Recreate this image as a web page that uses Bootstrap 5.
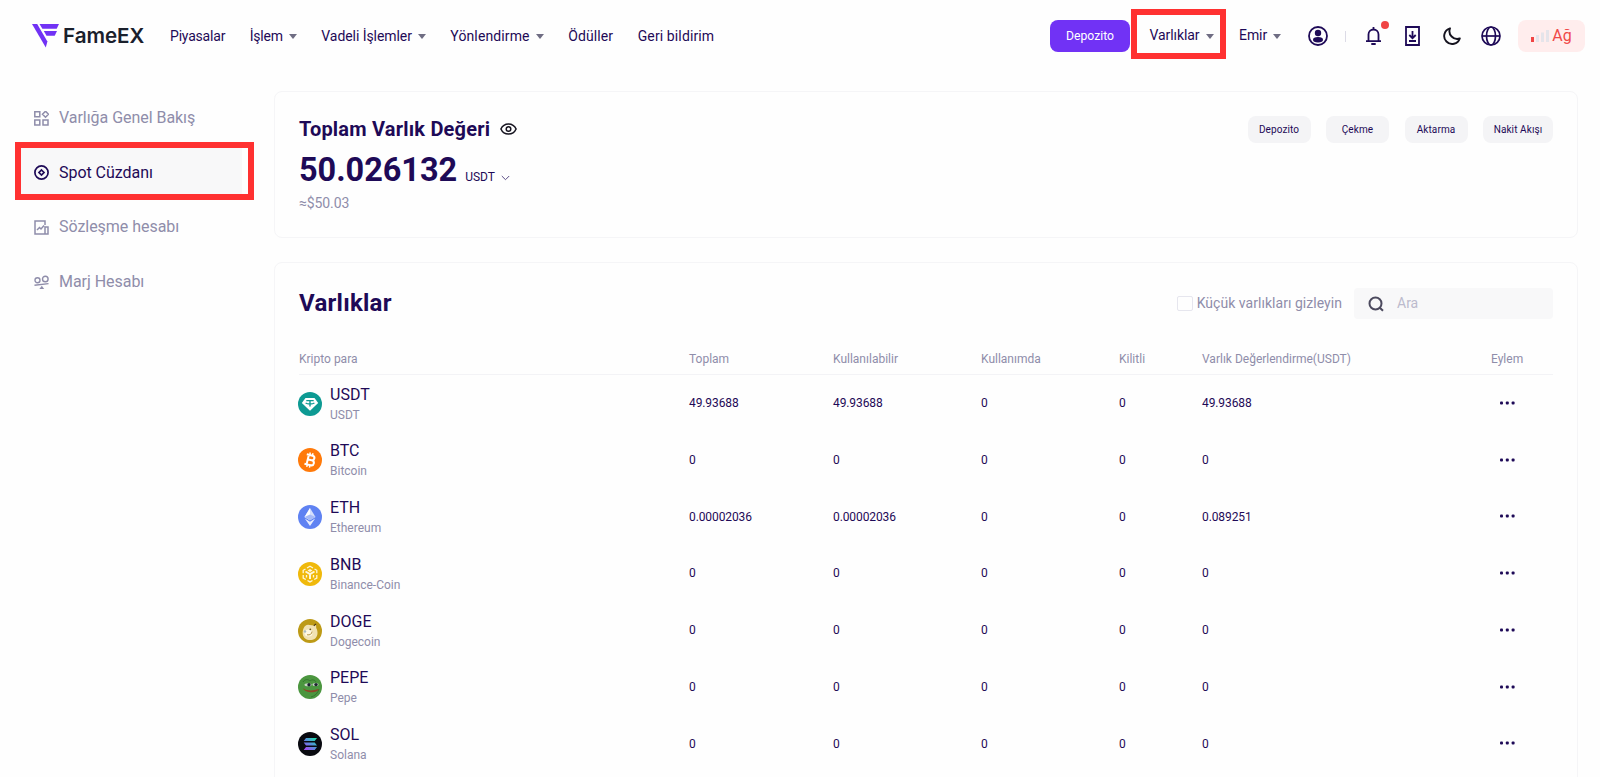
<!DOCTYPE html>
<html lang="tr">
<head>
<meta charset="utf-8">
<meta name="viewport" content="width=device-width, initial-scale=1">
<title>FameEX - Spot Cüzdanı</title>
<link rel="stylesheet" href="https://cdn.jsdelivr.net/npm/bootstrap@5.3.0/dist/css/bootstrap.min.css">
<style>
:root{--ink:#1e0a57;--muted-ink:#8f8daa;--soft:#f4f4f6;--edge:#f5f5f7;--violet:#7132f5;--alarm:#ff3131}
body{font-family:Roboto,"Noto Sans",sans-serif;color:var(--ink);background:#fefefe;height:777px;overflow:hidden;font-size:14px;line-height:1.4}
svg{display:block;flex:none}
.topbar{height:72px;padding:0 15px 0 32px}
.topbar .nav-link{color:var(--ink);font-size:14px;letter-spacing:-.07px}
.topbar .tight{letter-spacing:-.2px}
.topbar .loose{letter-spacing:.12px}
.brand-name{font:600 20.6px/24px Inter,sans-serif;color:#1a202c;letter-spacing:-.05px}
.caret{width:0;height:0;border:4px solid transparent;border-top:5px solid #6f6d83;border-bottom:0;margin-left:6px;display:inline-block}
.btn-deposit{background:var(--violet);color:#fff;width:80px;height:32px;border-radius:8px;font-size:12.2px;padding:0}
.mark-frame{position:absolute;border:6px solid var(--alarm);pointer-events:none}
.net-pill{width:67px;height:32px;border-radius:8px;background:#ffeded;color:#f04848;font-size:16px}
.alert-dot{position:absolute;width:8px;height:8px;border-radius:50%;background:#f04444;right:-8px;top:-6px}
.side{width:274px;padding:19px 20px 0 16px}
.side a{height:54.6px;padding-left:18px;color:var(--muted-ink);font-size:16px;text-decoration:none;gap:10px;letter-spacing:-.04px}
.side a.active{color:var(--ink)}
.side a.active::before{content:"";position:absolute;inset:2px 12px 5px 4px;background:#f8f8f9;z-index:-1}
.panel{border:1px solid var(--edge);border-radius:8px;background:#fefefe;padding:24px}
.total-panel{height:147px;padding-top:23px}
.total-title{font-size:20px;font-weight:700;line-height:28px;letter-spacing:.2px}
.total-sum{font-size:32.5px;font-weight:700;line-height:40px;letter-spacing:-.05px}
.btn-soft{background:var(--soft);color:var(--ink);font-size:10px;height:27px;width:63px;padding:0;border-radius:8px;letter-spacing:.1px}
.muted{color:var(--muted-ink)}
.search{width:199px;height:31px;background:#f8f8f9;border-radius:4px;padding-left:14px;gap:13px;color:#bcbbcd}
.tick{width:16px;height:15px;border:1px solid #e6e6ee;border-radius:2px}
.coins{table-layout:fixed;width:1254px;border-collapse:collapse}
.coins th{font-weight:400;color:var(--muted-ink);font-size:12px;height:31px;padding:2px 0 0;border-bottom:1px solid #f3f3f6;vertical-align:middle}
.coins td{height:56.75px;padding:2.5px 0 0;font-size:12px;letter-spacing:-.1px;vertical-align:middle}
.coins td:first-child{padding-top:4.5px;letter-spacing:0}
.coins td:first-child svg{margin:-2px 0 0 -1px}
.coins td:last-child{padding-top:1px}
.coin-code{font-size:16px;line-height:20px}
.coin-label{font-size:12px;line-height:20px;color:var(--muted-ink)}
</style>
</head>
<body>
<header class="topbar navbar navbar-expand flex-nowrap">
  <a class="d-flex align-items-center text-decoration-none" href="#" style="width:138px">
    <svg width="27" height="24" viewBox="0 0 27 24" fill="#7132f5"><path d="M0 0h5.200l10.200 17.500-1.600 6z"/><path d="M7.500 0H27l-2.300 4.800H10.400z"/><path d="M11.800 7H25l-2.300 4.800h-8.200z"/></svg>
    <span class="brand-name" style="margin-left:4px">FameEX</span>
  </a>
  <nav class="navbar-nav align-items-center" style="gap:24.500px;padding-top:1px">
    <a class="nav-link p-0 tight" href="#">Piyasalar</a>
    <a class="nav-link p-0 d-flex align-items-center tight" href="#">İşlem<i class="caret"></i></a>
    <a class="nav-link p-0 d-flex align-items-center" href="#">Vadeli İşlemler<i class="caret"></i></a>
    <a class="nav-link p-0 d-flex align-items-center loose" href="#">Yönlendirme<i class="caret"></i></a>
    <a class="nav-link p-0 loose" href="#">Ödüller</a>
    <a class="nav-link p-0 loose" href="#">Geri bildirim</a>
  </nav>
  <div class="d-flex align-items-center ms-auto">
    <button class="btn btn-deposit">Depozito</button>
    <a class="nav-link p-0 d-flex align-items-center justify-content-center position-relative" href="#" style="width:101px"><span class="mark-frame" style="inset:-17px 5px -13px 1px"></span><span style="margin-left:2px">Varlıklar</span><i class="caret"></i></a>
    <a class="nav-link p-0 d-flex align-items-center ms-2" href="#" style="width:69px">Emir<i class="caret"></i></a>
    <svg width="20" height="20" viewBox="0 0 20 20" fill="none" stroke="#1e0a57" stroke-width="1.800"><circle cx="10" cy="10" r="9"/><circle cx="10" cy="7" r="3.200" fill="#1e0a57" stroke="none"/><ellipse cx="10" cy="13.700" rx="5" ry="2.700" fill="#1e0a57" stroke="none"/></svg>
    <span style="width:1px;height:11px;background:#dcdbe6;margin:0 20px 0 17px"></span>
    <span class="position-relative"><svg width="15" height="18" viewBox="0 0 15 18" fill="none" stroke="#1e0a57" stroke-width="1.800"><path d="M0 14.200h15M2.500 14V7.500a5 5 0 0 1 10 0V14M7.500 0v2.500M5.300 17h4.400"/></svg><i class="alert-dot"></i></span>
    <svg style="margin-left:24px" width="15" height="20" viewBox="0 0 15 20" fill="none" stroke="#1e0a57" stroke-width="1.800"><path d="M1 1h13v18H1zM7.500 5v7M4.300 9l3.200 3.200L10.700 9M4 15h7"/></svg>
    <svg style="margin-left:23px" width="18" height="18" viewBox="0 0 18 18" fill="none" stroke="#15131f" stroke-width="1.900" stroke-linejoin="round"><path d="M7 1.300A8 8 0 1 0 16.800 11.500 7.800 7.800 0 0 1 7 1.300z"/></svg>
    <svg style="margin-left:20px" width="20" height="20" viewBox="0 0 20 20" fill="none" stroke="#1e0a57" stroke-width="1.700"><circle cx="10" cy="10" r="9"/><ellipse cx="10" cy="10" rx="4.500" ry="9"/><path d="M1 10h18"/></svg>
    <div class="net-pill d-flex align-items-center justify-content-center" style="margin-left:17px"><svg width="18" height="12" viewBox="0 0 18 12"><path fill="#f04444" d="M0 7h3v5H0z"/><path fill="#e5e4ea" d="M5 5h3v7H5zM10 2.500h3V12h-3zM15 0h3v12h-3z"/></svg><span style="margin-left:3px">Ağ</span></div>
  </div>
</header>
<div class="d-flex align-items-start">
  <aside class="side flex-shrink-0 d-flex flex-column">
    <a class="d-flex align-items-center" href="#"><svg width="15" height="15" viewBox="0 0 15 15" fill="none" stroke="#8f8daa" stroke-width="1.500"><path d="M.8.800h5v5h-5zM.8 9h5v5h-5zM9 9h5v5H9zM11.500.2l3 3-3 3-3-3z"/></svg>Varlığa Genel Bakış</a>
    <a class="d-flex align-items-center position-relative active" href="#"><span class="mark-frame" style="inset:-3.600px 0 0 -1px"></span><svg width="15" height="15" viewBox="0 0 15 15" fill="none" stroke="#1e0a57" stroke-width="1.700"><circle cx="7.500" cy="7.500" r="6.600"/><path d="M7.500 5l2.500 2.500L7.500 10 5 7.500z"/></svg>Spot Cüzdanı</a>
    <a class="d-flex align-items-center" href="#"><svg width="15" height="15" viewBox="0 0 15 15" fill="none" stroke="#8f8daa" stroke-width="1.500"><path d="M11 5V1H1v13h13V7h-3v7M3 10l2.500-2.500L7 9l3-3.500"/></svg>Sözleşme hesabı</a>
    <a class="d-flex align-items-center" href="#"><svg width="15" height="15" viewBox="0 0 15 15" fill="none" stroke="#8f8daa" stroke-width="1.400"><circle cx="3.500" cy="5.300" r="2.500"/><circle cx="11.300" cy="4" r="2.800"/><path d="M.5 10.300L14.500 8.600"/><path d="M7.800 10.800l2.400 3.200H5.400z" fill="#8f8daa" stroke="none"/></svg>Marj Hesabı</a>
  </aside>
  <main style="width:1304px">
    <section class="panel total-panel d-flex justify-content-between align-items-start" style="margin-top:19px">
      <div>
        <div class="d-flex align-items-center total-title">Toplam Varlık Değeri<svg style="margin-left:10px" width="17" height="12" viewBox="0 0 17 12" fill="none" stroke="#15131f" stroke-width="1.500"><path d="M.9 6C4-.8 13-.8 16.100 6 13 12.800 4 12.800.9 6z"/><circle cx="8.500" cy="6" r="2.300"/></svg></div>
        <div class="d-flex align-items-baseline" style="margin-top:7px"><span class="total-sum">50.026132</span><span style="font-size:12px;margin-left:8px">USDT</span><svg style="margin-left:6px" width="9" height="6" viewBox="0 0 9 6" fill="none" stroke="#5b4d86"><path d="M.8 1l3.700 3.700L8.200 1"/></svg></div>
        <div class="muted" style="margin-top:4px;letter-spacing:-.1px">≈$50.03</div>
      </div>
      <div class="d-flex" style="gap:15.500px;margin-top:1px">
        <button class="btn btn-soft">Depozito</button><button class="btn btn-soft">Çekme</button><button class="btn btn-soft">Aktarma</button><button class="btn btn-soft" style="width:70px">Nakit Akışı</button>
      </div>
    </section>
    <section class="panel" style="margin-top:24px;height:524px;padding-top:25px">
      <div class="d-flex align-items-center">
        <h2 class="m-0 fw-bold" style="font-size:24px;line-height:31px;letter-spacing:.25px">Varlıklar</h2>
        <span class="tick ms-auto"></span><span class="muted" style="margin:0 12px 0 4px;letter-spacing:.04px">Küçük varlıkları gizleyin</span>
        <div class="search d-flex align-items-center"><svg width="16" height="16" viewBox="0 0 16 16" fill="none" stroke="#4c4a5e" stroke-width="2"><circle cx="7.500" cy="7.500" r="6"/><path d="M11.800 11.800l3.200 3"/></svg>Ara</div>
      </div>
      <table class="coins" style="margin-top:24px">
        <colgroup><col style="width:390px"><col style="width:144px"><col style="width:148px"><col style="width:138px"><col style="width:83px"><col style="width:289px"><col></colgroup>
        <thead><tr><th>Kripto para</th><th>Toplam</th><th>Kullanılabilir</th><th>Kullanımda</th><th>Kilitli</th><th>Varlık Değerlendirme(USDT)</th><th>Eylem</th></tr></thead>
        <tbody id="coinRows"></tbody>
      </table>
    </section>
  </main>
</div>
<script src="https://cdn.jsdelivr.net/npm/bootstrap@5.3.0/dist/js/bootstrap.bundle.min.js"></script>
<script>
const icons={
USDT:'<circle cx="12" cy="12" r="12" fill="#0d9a93"/><path d="M7.500 6h9l3.700 5L12 18.800 3.800 11z" fill="#fff"/><path d="M8.300 8.600h7.400M12 8.600v6M7.600 11c2 1.300 6.800 1.300 8.800 0" stroke="#0d9a93" stroke-width="1.400" fill="none"/>',
BTC:'<circle cx="12" cy="12" r="12" fill="#ff7a0a"/><g transform="rotate(14 12 12)" fill="none" stroke="#fff" stroke-width="2"><path d="M7.500 7.200h6a2.300 2.300 0 0 1 0 4.700H9.500h4.500a2.500 2.500 0 0 1 0 5H7.500M9.700 7v10"/><path d="M10.500 4.700v2.500M13.300 4.700v2.500M10.500 17v2.500M13.300 17v2.500" stroke-width="1.500"/></g>',
ETH:'<circle cx="12" cy="12" r="12" fill="#5f82f2"/><path d="M12 3l5.500 9L12 15.300 6.500 12z" fill="#d5dffc"/><path d="M12 3v12.300L6.500 12z" fill="#fff"/><path d="M12 9.500l5.500 2.500L12 15.300 6.500 12z" fill="#a7bbf8"/><path d="M6.800 13.600L12 16.800l5.200-3.200L12 21z" fill="#e6ecfe"/>',
BNB:'<circle cx="12" cy="12" r="12" fill="#f0b90b"/><g fill="none" stroke="#fff6da" stroke-width="1.300"><path d="M9 6l3-1.700L15 6M16.500 7l2.300 1.300v3M18.800 13v3l-2.600 1.500M14.500 18.500L12 19.900l-2.500-1.400M7.800 17.500L5.200 16v-3M5.200 11.300v-3L7.500 7"/><path d="M7.500 9.500L12 12l4.500-2.500M12 12v5" stroke-width="2"/><path d="M8.500 13v2.500M15.500 13v2.500"/></g><path d="M12 7l2.500 1.500L12 10 9.500 8.500z" fill="#fff6da"/>',
DOGE:'<circle cx="12" cy="12" r="12" fill="#bd9a16"/><path d="M5.500 9.500Q7.500 5 11.500 6l4.500.500L18 5l.2 4c2 3.500 1.800 8-1 10.500-3 2-7.500 2-10 0C4.500 17.500 4 13 5.500 9.500z" fill="#f1e2b3"/><ellipse cx="10.500" cy="14" rx="4" ry="3.500" fill="#fff8e2"/><circle cx="12.300" cy="10.300" r=".9" fill="#67551d"/><path d="M15.800 6.800L18 5" stroke="#4d3b10" stroke-width="1.200"/><ellipse cx="7" cy="12.500" rx="1.200" ry="1.300" fill="#a9bcc4"/><path d="M9 15.800c3 .6 5-1 5-3.300" stroke="#b59543" fill="none"/>',
PEPE:'<circle cx="12" cy="12" r="12" fill="#4b963f"/><path d="M5 7c2-3 5-3 7-1 2-2 5-1 6 1M13 22c4-1 7-4 8-8" fill="none" stroke="#35762f"/><ellipse cx="10" cy="9.800" rx="3.500" ry="1.500" fill="#c9d6c6"/><ellipse cx="17.500" cy="9.600" rx="3" ry="1.500" fill="#c9d6c6"/><circle cx="11" cy="9.800" r="1.700" fill="#1d2430"/><circle cx="18" cy="9.600" r="1.700" fill="#1d2430"/><path d="M5 13.200c4 2.800 10 2.800 15.500.8-.5 4.500-13.500 4.500-15.500-.8z" fill="#8e4528"/>',
SOL:'<defs><linearGradient id="solFill" x1="0" y1="1" x2="1" y2="0"><stop stop-color="#b43df5"/><stop offset=".5" stop-color="#598bdc"/><stop offset="1" stop-color="#18eba6"/></linearGradient></defs><circle cx="12" cy="12" r="12" fill="#090a10"/><path d="M8 6h11l-2.300 3H5.700zM5.700 10.500h11l2.300 3H8zM8 15h11l-2.300 3H5.700z" fill="url(#solFill)"/>'};
const coins=[['USDT','USDT','49.93688','49.93688','49.93688'],['BTC','Bitcoin','0','0','0'],['ETH','Ethereum','0.00002036','0.00002036','0.089251'],['BNB','Binance-Coin','0','0','0'],['DOGE','Dogecoin','0','0','0'],['PEPE','Pepe','0','0','0'],['SOL','Solana','0','0','0']];
document.getElementById('coinRows').innerHTML=coins.map(([code,label,total,free,value])=>`<tr><td><div class="d-flex align-items-center"><svg width="24" height="24" viewBox="0 0 24 24">${icons[code]}</svg><div class="ms-2"><div class="coin-code">${code}</div><div class="coin-label">${label}</div></div></div></td><td>${total}</td><td>${free}</td><td>0</td><td>0</td><td>${value}</td><td><svg style="margin-left:9px" width="15" height="4" viewBox="0 0 15 4" fill="#1e0a57"><rect y=".5" width="3" height="3" rx="1"/><rect x="5.800" y=".5" width="3" height="3" rx="1"/><rect x="11.600" y=".5" width="3" height="3" rx="1"/></svg></td></tr>`).join('');
</script>
</body>
</html>
